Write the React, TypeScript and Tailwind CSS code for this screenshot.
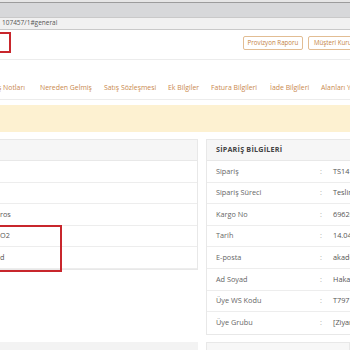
import React from 'react';

const tabs: [string, string][] = [
  ['ş Notları', 'w-[42px] -ml-[2px]'],
  ['Nereden Gelmiş', 'w-[64px]'],
  ['Satış Sözleşmesi', 'w-[64px]'],
  ['Ek Bilgiler', 'w-[43px]'],
  ['Fatura Bilgileri', 'w-[59px]'],
  ['İade Bilgileri', 'w-[51px]'],
  ['Alanları Yönet', 'w-[60px]'],
];

const orderRows = [
  ['Sipariş', 'TS1410'],
  ['Sipariş Süreci', 'Teslim'],
  ['Kargo No', '69620'],
  ['Tarih', '14.04'],
  ['E-posta', 'akadem'],
  ['Ad Soyad', 'Hakan'],
  ['Üye WS Kodu', 'T7971'],
  ['Üye Grubu', '[Ziyar'],
];

const leftRows = ['', '', 'ros', 'O2', 'd'];

export default function App() {
  return (
    <div className="w-[350px] h-[350px] overflow-hidden bg-white text-[#666] font-['Open_Sans',sans-serif] text-[7.3px] leading-none">
      {/* browser chrome */}
      <div className="h-[3px] bg-[#e6e6e6] border-b border-[#9c9c9c]" />
      <div className="h-[14px] bg-[#d7d8da]" />
      <div className="h-[13px] bg-[#f1f1f1] border-y border-[#c9c9c9] flex items-center pl-[2px] text-[6.5px] text-[#555]">
        107457/1#general
      </div>

      {/* page header */}
      <div className="h-[30px] border-b border-[#ececec] flex items-start">
        <div className="w-[11px] h-[21px] shrink-0 border-2 border-l-0 border-[#c8262c] mt-[2px]" />
        <div className="ml-[232px] mt-[6px] flex gap-[5px] whitespace-nowrap shrink-0">
          <span className="h-[14px] w-[60px] flex items-center justify-center border border-[#e2bd93] rounded-[2px] text-[#c47f45] text-[6.2px]">
            Provizyon Raporu
          </span>
          <span className="h-[14px] px-[5px] flex items-center border border-[#e2bd93] rounded-[2px] text-[#c47f45] text-[6.2px]">
            Müşteri Kurumsal
          </span>
        </div>
      </div>

      {/* tabs */}
      <div className="h-[40px] border-b border-[#ececec] flex items-end pb-[7px] whitespace-nowrap text-[#c9894e] text-[6.9px]">
        {tabs.map(([t, w]) => (
          <span key={t} className={`${w} shrink-0`}>
            {t}
          </span>
        ))}
      </div>

      <div className="h-[27px] mt-[5px] bg-[#fdf1d1]" />

      {/* panels */}
      <div className="mt-[7px] flex gap-[8px] items-start">
        <div className="w-[198px] shrink-0 border border-l-0 border-[#e8e8e8] relative">
          <div className="h-[21px] bg-[#f6f6f6] border-b border-[#e8e8e8]" />
          {leftRows.map((r, i) => (
            <div
              key={i}
              className="h-[21.6px] flex items-center border-b border-[#ededed] last:border-b-0 text-[#555]"
            >
              <span>{r}</span>
            </div>
          ))}
          <div className="absolute left-0 top-[85px] w-[62px] h-[47px] border-2 border-l-0 border-[#c8262c]" />
        </div>

        <div className="flex-1 border border-r-0 border-[#e8e8e8]">
          <div className="h-[21px] bg-[#f6f6f6] border-b border-[#e8e8e8] flex items-center pl-[9px] font-bold text-[#444] text-[7.2px] tracking-[0.2px]">
            SİPARİŞ BİLGİLERİ
          </div>
          {orderRows.map(([k, v]) => (
            <div
              key={k}
              className="h-[21.6px] flex items-center border-b border-[#ededed] last:border-b-0 whitespace-nowrap"
            >
              <span className="w-[113px] shrink-0 pl-[9px]">{k}</span>
              <span className="w-[13px] shrink-0 text-[#aaa]">:</span>
              <span className="text-[#555]">{v}</span>
            </div>
          ))}
        </div>
      </div>

      <div className="mt-[7px] flex gap-[8px]">
        <div className="w-[198px] h-[20px] bg-[#f3f3f3] flex justify-end pr-[14px] pt-[4px] text-[#d08a4a]">.</div>
        <div className="flex-1 h-[20px] bg-[#f7f7f7] border border-[#e8e8e8] pl-[30px] pt-[4px] text-[#bbb] tracking-[6px]">....</div>
      </div>
    </div>
  );
}
